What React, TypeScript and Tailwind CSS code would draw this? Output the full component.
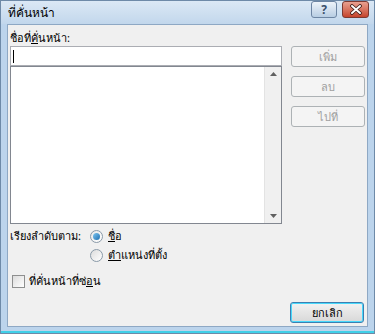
import React from "react";

const font = { fontFamily: "Tahoma, 'Noto Sans', 'DejaVu Sans', sans-serif" };

function Btn({ children, disabled, isDefault }: { children: React.ReactNode; disabled?: boolean; isDefault?: boolean }) {
  return (
    <div
      className={
        "w-[74px] h-[21px] rounded-[3px] flex items-center justify-center text-[11px] leading-none " +
        (disabled
          ? "border border-[#adb2b5] bg-[#f4f4f4] text-[#a0a0a0]"
          : isDefault
          ? "border border-[#3c7fb1] bg-gradient-to-b from-[#f2f2f2] to-[#d8d8d8] text-black shadow-[inset_0_0_0_1px_#48d8fb]"
          : "border border-[#707070] bg-gradient-to-b from-[#f2f2f2] to-[#dcdcdc] text-black")
      }
    >
      {children}
    </div>
  );
}

export default function App() {
  return (
    <div style={font} className="w-[375px] h-[334px] bg-[#bcd4ec] flex flex-col border border-[#6e8aa8]">
      {/* title bar */}
      <div className="h-[23px] flex items-start justify-between pl-[7px] pr-[5px] bg-gradient-to-b from-[#dbe8f5] to-[#c2d7ec]">
        <div className="text-[12px] leading-[14px] text-black mt-[5px]">ที่คั่นหน้า</div>
        <div className="flex gap-[5px]">
          <div className="w-[26px] h-[17px] rounded-[3px] border border-[#6d85a3] bg-gradient-to-b from-[#eef4fa] to-[#b8cde3] flex items-center justify-center text-[12px] leading-none font-bold text-[#3a4f6a]">?</div>
          <div className="w-[27px] h-[17px] rounded-[3px] border border-[#7d3a32] bg-gradient-to-b from-[#e8a090] to-[#c5432c] flex items-center justify-center">
            <svg width="14" height="11" viewBox="0 0 14 11">
              <path d="M3 2 L11 9 M11 2 L3 9" stroke="#3a1a15" strokeWidth="3.6" strokeLinecap="round" />
              <path d="M3 2 L11 9 M11 2 L3 9" stroke="#ffffff" strokeWidth="2" strokeLinecap="round" />
            </svg>
          </div>
        </div>
      </div>
      {/* body */}
      <div className="flex-1 mx-[6px] mb-[4px] border border-[#8ea8c4] bg-[#f0f0f0] flex flex-col px-[2px] pt-[5px] text-[11px] leading-[16px] text-black">
        <div className="flex">
          <div className="w-[272px] flex flex-col">
            <div className="h-[16px]">ชื่อที่<u>คั่</u>นหน้า:</div>
            <div className="h-[20px] border border-[#abadb3] bg-white flex items-center pl-[2px]">
              <div className="w-px h-[13px] bg-black" />
            </div>
            <div className="h-[158px] border border-[#828790] bg-white flex justify-end">
              <div className="w-[17px] bg-[#f0f0f0] border-l border-[#e3e3e3] flex flex-col justify-between items-center py-[5px]">
                <svg width="7" height="4" viewBox="0 0 7 4"><path d="M0 4 L3.5 0 L7 4Z" fill="#606060" /></svg>
                <svg width="7" height="4" viewBox="0 0 7 4"><path d="M0 0 L3.5 4 L7 0Z" fill="#606060" /></svg>
              </div>
            </div>
          </div>
          <div className="ml-[9px] mt-[16px] flex flex-col gap-[9px]">
            <Btn disabled>เพิ่ม</Btn>
            <Btn disabled>ลบ</Btn>
            <Btn disabled>ไปที่</Btn>
          </div>
        </div>
        <div className="flex mt-[4px]">
          <div className="w-[80px] h-[16px]">เรียงลำดับตาม:</div>
          <div className="flex flex-col gap-[3px]">
            <div className="flex items-center gap-[5px] h-[16px]">
              <div className="w-[13px] h-[13px] rounded-full border border-[#8a9aa8] bg-gradient-to-br from-[#e8e8e8] to-white flex items-center justify-center">
                <div className="w-[7px] h-[7px] rounded-full bg-gradient-to-br from-[#7cc6f0] to-[#1a6fb0]" />
              </div>
              <span><u>ชื่</u>อ</span>
            </div>
            <div className="flex items-center gap-[5px] h-[16px]">
              <div className="w-[13px] h-[13px] rounded-full border border-[#8a9aa8] bg-gradient-to-br from-[#dcdcdc] to-white" />
              <span><u>ตำ</u>แหน่งที่ตั้ง</span>
            </div>
          </div>
        </div>
        <div className="flex items-center gap-[4px] mt-[10px] ml-[2px] h-[16px]">
          <div className="w-[13px] h-[13px] border border-[#8e8f8f] bg-gradient-to-br from-[#dcdcdc] to-white" />
          <span>ที่คั่นหน้าที่ซ่<u>อ</u>น</span>
        </div>
        <div className="flex justify-end mt-[13px] pr-[1px]">
          <Btn isDefault>ยกเลิก</Btn>
        </div>
      </div>
      <div className="h-[2px] bg-[#40d0e8]" />
    </div>
  );
}
